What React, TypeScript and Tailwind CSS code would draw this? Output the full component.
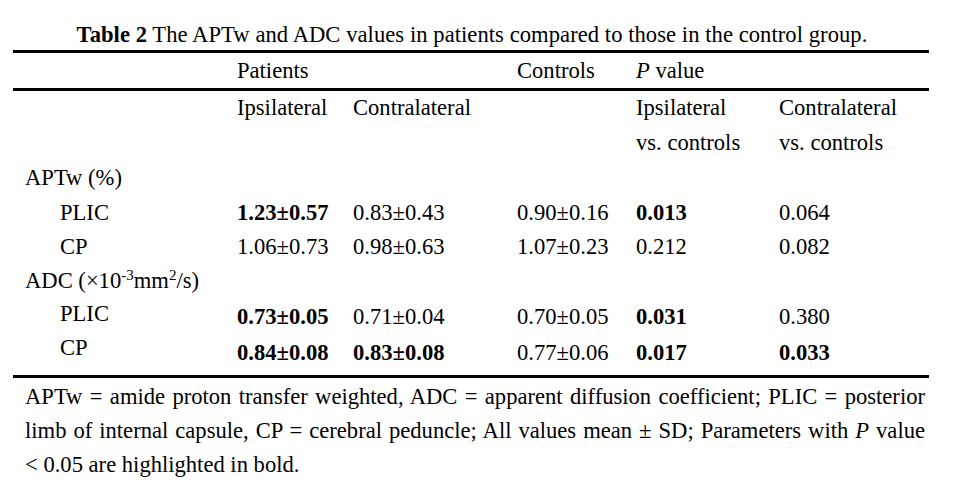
import React from "react";

const cols = "grid grid-cols-[224px_116px_164px_119px_143px_150px]";

type Cell = React.ReactNode;

function Row({ h, cells, className = "" }: { h: number; cells: Cell[]; className?: string }) {
  return (
    <div className={`${cols} ${className}`} style={{ height: h, lineHeight: `${h}px` }}>
      {cells.map((c, i) => (
        <div key={i} className="whitespace-nowrap">{c}</div>
      ))}
    </div>
  );
}

const B = ({ children }: { children: React.ReactNode }) => <span className="font-bold">{children}</span>;

export default function App() {
  return (
    <div className="min-h-screen bg-white text-black font-['Liberation_Serif','Times_New_Roman',serif] text-[22.6px]">
      <div className="ml-[13px] w-[916px] pt-[20px]">
        <p className="h-[30px] leading-[30px] text-center whitespace-nowrap pl-[2px] tracking-[0.05px]">
          <B>Table 2</B> The APTw and ADC values in patients compared to those in the control group.
        </p>

        <div className="border-y-[3px] border-black">
          <Row h={35} cells={["", "Patients", "", "Controls", <span><i>P</i> value</span>, ""]} />
        </div>

        <Row h={34} cells={["", "Ipsilateral", "Contralateral", "", "Ipsilateral", "Contralateral"]} />
        <Row h={35} cells={["", "", "", "", "vs. controls", "vs. controls"]} />
        <Row h={35} cells={[<span className="pl-[12px]">APTw (%)</span>, "", "", "", "", ""]} />
        <Row h={35} cells={[<span className="pl-[47px]">PLIC</span>, <B>1.23±0.57</B>, "0.83±0.43", "0.90±0.16", <B>0.013</B>, "0.064"]} />
        <Row h={33} cells={[<span className="pl-[47px]">CP</span>, "1.06±0.73", "0.98±0.63", "1.07±0.23", "0.212", "0.082"]} />
        <Row
          h={36}
          cells={[
            <span className="pl-[12px]">
              ADC (×10<sup className="text-[15px] top-[-0.55em]">-3</sup>mm<sup className="text-[15px] top-[-0.55em]">2</sup>/s)
            </span>,
            "", "", "", "", "",
          ]}
        />
        <Row h={36} cells={[<span className="pl-[47px] relative -top-[3px]">PLIC</span>, <B>0.73±0.05</B>, "0.71±0.04", "0.70±0.05", <B>0.031</B>, "0.380"]} />
        <Row h={36} cells={[<span className="pl-[47px] relative -top-[5px]">CP</span>, <B>0.84±0.08</B>, <B>0.83±0.08</B>, "0.77±0.06", <B>0.017</B>, <B>0.033</B>]} />

        <div className="h-[4px] border-b-[3px] border-black box-content" />

        <div className="pl-[12px] pr-[4px] pt-[2px] leading-[34px]">
          <p className="text-justify [text-align-last:justify] whitespace-nowrap">
            APTw = amide proton transfer weighted, ADC = apparent diffusion coefficient; PLIC = posterior
          </p>
          <p className="text-justify [text-align-last:justify] whitespace-nowrap">
            limb of internal capsule, CP = cerebral peduncle; All values mean ± SD; Parameters with <i>P</i> value
          </p>
          <p>&lt; 0.05 are highlighted in bold.</p>
        </div>
      </div>
    </div>
  );
}
